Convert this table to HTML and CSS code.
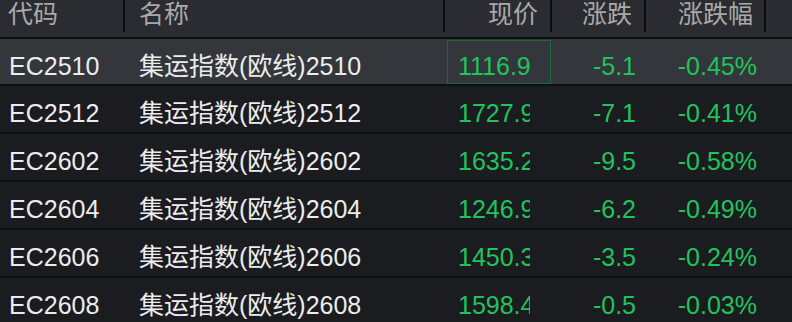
FILE: index.html
```html
<!DOCTYPE html>
<html lang="zh-CN">
<head>
<meta charset="utf-8">
<title>集运指数</title>
<link rel="stylesheet" href="styles.css">
</head>
<body>
<div class="table">
  <div class="row head">
    <div class="cell c-code"><span class="htext">代码</span></div>
    <div class="cell c-name"><span class="htext">名称</span></div>
    <div class="cell c-price r"><span class="htext">现价</span></div>
    <div class="cell c-chg r"><span class="htext">涨跌</span></div>
    <div class="cell c-pct r"><span class="htext">涨跌幅</span></div>
    <div class="cell c-rest"></div>
  </div>
  <div class="row item selected">
    <div class="cell c-code">EC2510</div>
    <div class="cell c-name">集运指数(欧线)2510</div>
    <div class="cell c-price"><div class="focus"><span class="clip">1116.9</span></div></div>
    <div class="cell c-chg r g">-5.1</div>
    <div class="cell c-pct r g">-0.45%</div>
    <div class="cell c-rest"></div>
  </div>
  <div class="row item">
    <div class="cell c-code">EC2512</div>
    <div class="cell c-name">集运指数(欧线)2512</div>
    <div class="cell c-price"><span class="clip">1727.9</span></div>
    <div class="cell c-chg r g">-7.1</div>
    <div class="cell c-pct r g">-0.41%</div>
    <div class="cell c-rest"></div>
  </div>
  <div class="row item">
    <div class="cell c-code">EC2602</div>
    <div class="cell c-name">集运指数(欧线)2602</div>
    <div class="cell c-price"><span class="clip">1635.2</span></div>
    <div class="cell c-chg r g">-9.5</div>
    <div class="cell c-pct r g">-0.58%</div>
    <div class="cell c-rest"></div>
  </div>
  <div class="row item">
    <div class="cell c-code">EC2604</div>
    <div class="cell c-name">集运指数(欧线)2604</div>
    <div class="cell c-price"><span class="clip">1246.9</span></div>
    <div class="cell c-chg r g">-6.2</div>
    <div class="cell c-pct r g">-0.49%</div>
    <div class="cell c-rest"></div>
  </div>
  <div class="row item">
    <div class="cell c-code">EC2606</div>
    <div class="cell c-name">集运指数(欧线)2606</div>
    <div class="cell c-price"><span class="clip">1450.3</span></div>
    <div class="cell c-chg r g">-3.5</div>
    <div class="cell c-pct r g">-0.24%</div>
    <div class="cell c-rest"></div>
  </div>
  <div class="row item">
    <div class="cell c-code">EC2608</div>
    <div class="cell c-name">集运指数(欧线)2608</div>
    <div class="cell c-price"><span class="clip">1598.4</span></div>
    <div class="cell c-chg r g">-0.5</div>
    <div class="cell c-pct r g">-0.03%</div>
    <div class="cell c-rest"></div>
  </div>
</div>
</body>
</html>
```
FILE: styles.css
```css
html, body {
  margin: 0;
  padding: 0;
  background: #1b1c20;
}
body {
  width: 792px;
  height: 322px;
  overflow: hidden;
  font-family: "Liberation Sans", "Noto Sans CJK SC", sans-serif;
  font-size: 25px;
  color: #ececec;
}
.table {
  display: flex;
  flex-direction: column;
}
.row {
  display: grid;
  grid-template-columns: 125px 320px 107px 94px 120px 1fr;
}
.head {
  height: 37px;
  background: #2b2c31;
  border-bottom: 2px solid #0e0f11;
  color: #a9a9a9;
}
.head .cell {
  height: 32px;
  line-height: 29px;
  border-right: 2px solid #0c0c0e;
  box-sizing: border-box;
}
.head .c-rest {
  border-right: none;
}
.head .c-code { padding-left: 8px; }
.head .c-name { padding-left: 14px; }
.head .c-price { padding-right: 12px; }
.head .c-chg { padding-right: 12px; }
.head .c-pct { padding-right: 11px; }
.cell {
  white-space: nowrap;
  overflow: hidden;
  box-sizing: border-box;
}
.r { text-align: right; }
.g { color: #22c35c; }
.item {
  height: 48px;
  border-bottom: 2px solid #0e0f11;
  box-sizing: border-box;
  line-height: 48px;
}
.item .cell {
  padding-top: 3px;
}
.item.selected {
  height: 47px;
  background: #33363b;
}
.item .c-code { padding-left: 9px; }
.item .c-name { padding-left: 14px; }
.item .c-chg { padding-right: 10px; }
.item .c-pct { padding-right: 9px; }
.item .c-price { padding-left: 13px; color: #22c35c; }
.clip {
  display: inline-block;
  width: 72px;
  overflow: hidden;
  vertical-align: top;
}
.item.selected .c-price {
  padding-left: 2px;
  padding-top: 1px;
}
.focus {
  width: 104px;
  height: 44px;
  box-sizing: border-box;
  border: 1px solid #1c6a38;
  padding-left: 10px;
  padding-top: 2px;
  line-height: 46px;
}
```
